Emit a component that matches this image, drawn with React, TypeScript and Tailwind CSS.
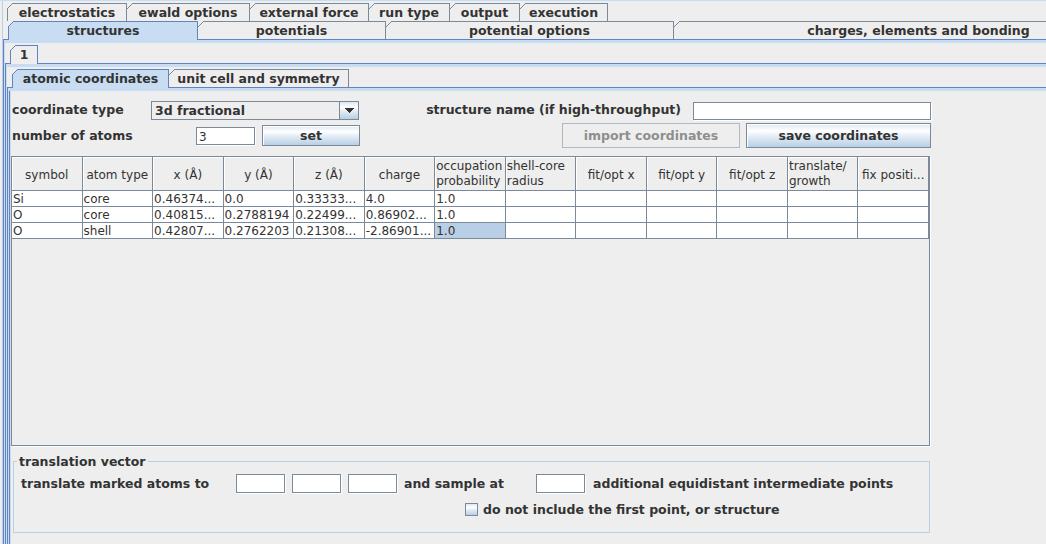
import React from 'react';

// Metal/Ocean look: shared colours and the button gradient
const grad = 'bg-[linear-gradient(to_bottom,#dde8f3_0%,#ffffff_30%,#dde8f3_60%,#b8cfe5_100%)]';

// Cut top-left corner of a Metal tab, drawn pixel by pixel
const Corner: React.FC<{ edge: string; shift: string }> = ({ edge, shift }) => (
  <svg className={`absolute -top-[1px] ${shift}`} width="6" height="6" shapeRendering="crispEdges">
    <path d="M0 0H6L0 6Z" fill="#eeeeee" />
    {[0, 1, 2, 3, 4, 5].map((i) => (
      <rect key={i} x={i} y={5 - i} width="1" height="1" fill={edge} />
    ))}
  </svg>
);

type TabDef = { label: string; w: string; selected?: boolean; bg?: string };

const Tab: React.FC<TabDef & { first?: boolean }> = ({ label, w, selected, first, bg }) => {
  const edge = selected ? '#6382bf' : '#7a8a99';
  return (
    <div
      className={`relative flex shrink-0 justify-center border-t border-r font-bold ${w} ${
        first ? 'border-l' : ''
      } ${selected ? `z-10 h-[19px] border-[#6382bf] ${bg ?? 'bg-[#c8ddf2]'}` : 'h-[18px] border-[#7a8a99]'}`}
    >
      <Corner edge={edge} shift={first ? '-left-[1px]' : 'left-0'} />
      <span className="leading-[17px] whitespace-nowrap">{label}</span>
    </div>
  );
};

const TabRow: React.FC<{ tabs: TabDef[]; offset: string }> = ({ tabs, offset }) => (
  <div className={`flex h-[18px] shrink-0 ${offset}`}>
    {tabs.map((t, i) => (
      <Tab key={t.label} {...t} first={i === 0} />
    ))}
  </div>
);

// Content area of a tabbed pane: dark line, then the light selected-tab band
const PaneBody: React.FC<{ children: React.ReactNode }> = ({ children }) => (
  <div className="flex flex-1 flex-col border-t border-l border-[#6382bf]">
    <div className="flex flex-1 flex-col border-t-[3px] border-l border-[#c8ddf2]">{children}</div>
  </div>
);

const Field: React.FC<{ w: string; h?: string; value?: string }> = ({ w, h = 'h-[18px]', value }) => (
  <div
    className={`${w} ${h} shrink-0 border border-[#7a8a99] bg-white pl-[2px] pt-[1px] text-[12px] leading-[16px] font-normal shadow-[1px_1px_0_#ffffff]`}
  >
    {value}
  </div>
);

const Button: React.FC<{ label: string; w: string; h: string; disabled?: boolean }> = ({ label, w, h, disabled }) => (
  <div
    className={`${w} ${h} flex shrink-0 items-center justify-center border pt-[1px] font-bold ${
      disabled
        ? 'border-[#b0b8c2] text-[#8e8e8e]'
        : `border-[#7a8a99] ${grad} shadow-[inset_1px_1px_0_#ffffff]`
    }`}
  >
    {label}
  </div>
);

const topRow1: TabDef[] = [
  { label: 'electrostatics', w: 'w-[120px]' },
  { label: 'ewald options', w: 'w-[123px]' },
  { label: 'external force', w: 'w-[119px]' },
  { label: 'run type', w: 'w-[81px]' },
  { label: 'output', w: 'w-[70px]' },
  { label: 'execution', w: 'w-[88px]' },
];

const topRow2: TabDef[] = [
  { label: 'structures', w: 'w-[190px]', selected: true },
  { label: 'potentials', w: 'w-[188px]' },
  { label: 'potential options', w: 'w-[288px]' },
  { label: 'charges, elements and bonding', w: 'w-[490px]' },
];

const headers: (string | [string, string])[] = [
  'symbol',
  'atom type',
  'x (Å)',
  'y (Å)',
  'z (Å)',
  'charge',
  ['occupation', 'probability'],
  ['shell-core', 'radius'],
  'fit/opt x',
  'fit/opt y',
  'fit/opt z',
  ['translate/', 'growth'],
  'fix positi...',
];

const rows = [
  ['Si', 'core', '0.46374...', '0.0', '0.33333...', '4.0', '1.0'],
  ['O', 'core', '0.40815...', '0.2788194', '0.22499...', '0.86902...', '1.0'],
  ['O', 'shell', '0.42807...', '0.2762203', '0.21308...', '-2.86901...', '1.0'],
];

const AtomTable: React.FC = () => (
  <div className="mt-[8px] h-[290px] w-[919px] border border-[#7a8a99] bg-[#eeeeee] text-[12px] shadow-[1px_1px_0_#ffffff]">
    <div className="grid h-[34px] grid-cols-[repeat(13,minmax(0,1fr))]">
      {headers.map((h, i) =>
        typeof h === 'string' ? (
          <div
            key={i}
            className="flex items-center justify-center overflow-hidden whitespace-nowrap border-r border-b border-[#7a8a99] pt-[3px] shadow-[inset_1px_1px_0_#ffffff]"
          >
            {h}
          </div>
        ) : (
          <div
            key={i}
            className="flex flex-col justify-center overflow-hidden whitespace-nowrap border-r border-b border-[#7a8a99] pl-[1px] pt-[1px] leading-[15px] shadow-[inset_1px_1px_0_#ffffff]"
          >
            <span>{h[0]}</span>
            <span>{h[1]}</span>
          </div>
        )
      )}
    </div>
    {rows.map((r, ri) => (
      <div key={ri} className="grid h-[16px] grid-cols-[repeat(13,minmax(0,1fr))]">
        {Array.from({ length: 13 }).map((_, ci) => (
          <div
            key={ci}
            className={`overflow-hidden whitespace-nowrap border-r border-b border-[#7a8a99] pl-[1px] pt-[1px] leading-[15px] ${
              ri === 2 && ci === 6 ? 'bg-[#b8cfe5]' : 'bg-white'
            }`}
          >
            {r[ci] ?? ''}
          </div>
        ))}
      </div>
    ))}
  </div>
);

const AtomicCoordinates: React.FC = () => (
  <div className="w-[920px] pt-[10px]">
    {/* coordinate type / structure name */}
    <div className="flex h-[19px] items-center font-bold">
      <div className="w-[140px] shrink-0 pl-[1px]">coordinate type</div>
      <div className="flex h-[19px] w-[208px] shrink-0 border border-[#7a8a99] bg-[#eeeeee]">
        <div className="flex-1 pl-[3px] leading-[17px]">3d fractional</div>
        <div className={`flex w-[19px] items-center justify-center border-l border-[#7a8a99] ${grad}`}>
          <svg width="9" height="5" shapeRendering="crispEdges">
            <path d="M0 0H9L4.5 5Z" fill="#333333" />
          </svg>
        </div>
      </div>
      <div className="flex-1 pr-[12px] text-right">structure name (if high-throughput)</div>
      <Field w="w-[238px]" />
    </div>

    {/* number of atoms / buttons */}
    <div className="mt-[3px] flex h-[25px] items-center font-bold">
      <div className="w-[185px] shrink-0 pl-[1px] pt-[2px]">number of atoms</div>
      <Field w="w-[59px]" value="3" />
      <div className="ml-[7px]">
        <Button label="set" w="w-[98px]" h="h-[21px]" />
      </div>
      <div className="flex-1" />
      <Button label="import coordinates" w="w-[178px]" h="h-[25px]" disabled />
      <div className="ml-[6px]">
        <Button label="save coordinates" w="w-[185px]" h="h-[25px]" />
      </div>
    </div>

    <AtomTable />

    {/* translation vector */}
    <fieldset className="mt-[8px] ml-[2px] h-[79px] w-[917px] border border-[#b8cfe5] font-bold">
      <legend className="ml-[3px] px-[2px] leading-[15px]">translation vector</legend>
      <div className="mt-[5px] flex h-[19px] items-center">
        <div className="ml-[7px] w-[215px] shrink-0 pt-[2px]">translate marked atoms to</div>
        <Field w="w-[49px]" h="h-[19px]" />
        <div className="ml-[7px]">
          <Field w="w-[49px]" h="h-[19px]" />
        </div>
        <div className="ml-[7px]">
          <Field w="w-[49px]" h="h-[19px]" />
        </div>
        <div className="ml-[7px] w-[132px] shrink-0 pt-[2px]">and sample at</div>
        <Field w="w-[49px]" h="h-[19px]" />
        <div className="ml-[8px] whitespace-nowrap pt-[2px]">additional equidistant intermediate points</div>
      </div>
      <div className="mt-[10px] flex h-[13px] items-center">
        <div className={`ml-[451px] h-[13px] w-[13px] shrink-0 border border-[#7a8a99] ${grad}`} />
        <div className="ml-[5px] whitespace-nowrap pt-[2px]">do not include the first point, or structure</div>
      </div>
    </fieldset>
  </div>
);

export default function App() {
  return (
    <div className="h-[544px] w-[1046px] overflow-hidden border-t border-[#c8ddf2] bg-[#eeeeee] font-['DejaVu_Sans',sans-serif] text-[12.5px] text-[#333333]">
      <div className="ml-[2px] flex h-full flex-col border-l border-[#b8cfe5] pt-[2px]">
        {/* main tabs, two rows */}
        <TabRow tabs={topRow1} offset="ml-[4px]" />
        <TabRow tabs={topRow2} offset="ml-[5px]" />
        <PaneBody>
          <div className="flex flex-1 flex-col pt-[2px]">
            <TabRow tabs={[{ label: '1', w: 'w-[28px]', selected: true, bg: 'bg-[#eeeeee]' }]} offset="ml-[5px]" />
            <PaneBody>
              <div className="flex flex-1 flex-col pt-[2px]">
                <TabRow
                  tabs={[
                    { label: 'atomic coordinates', w: 'w-[157px]', selected: true },
                    { label: 'unit cell and symmetry', w: 'w-[180px]' },
                  ]}
                  offset="ml-[5px]"
                />
                <PaneBody>
                  <div className="flex flex-1 border-l border-[#6382bf]">
                    <div className="flex-1 border-l border-[#c8ddf2]">
                      <AtomicCoordinates />
                    </div>
                  </div>
                </PaneBody>
              </div>
            </PaneBody>
          </div>
        </PaneBody>
      </div>
    </div>
  );
}
